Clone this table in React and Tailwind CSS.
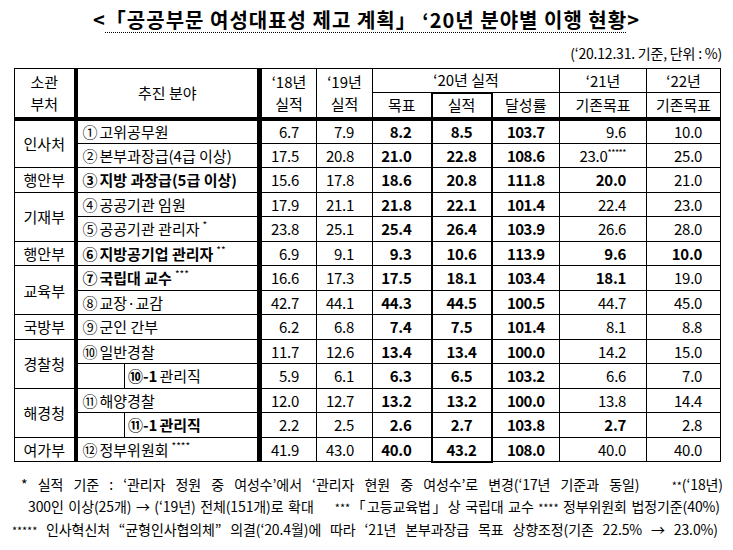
import React from 'react';

const rows = [
  { dept: '인사처', span: 2, num: '①', label: '고위공무원', v: ['6.7', '7.9', '8.2', '8.5', '103.7', '9.6', '10.0'] },
  { num: '②', label: '본부과장급(4급 이상)', v: ['17.5', '20.8', '21.0', '22.8', '108.6', '23.0', '25.0'], sup21: '*****' },
  { dept: '행안부', span: 1, num: '③', label: '지방 과장급(5급 이상)', bold: true, v: ['15.6', '17.8', '18.6', '20.8', '111.8', '20.0', '21.0'], b21: true },
  { dept: '기재부', span: 2, num: '④', label: '공공기관 임원', v: ['17.9', '21.1', '21.8', '22.1', '101.4', '22.4', '23.0'] },
  { num: '⑤', label: '공공기관 관리자', sup: '*', v: ['23.8', '25.1', '25.4', '26.4', '103.9', '26.6', '28.0'] },
  { dept: '행안부', span: 1, num: '⑥', label: '지방공기업 관리자', sup: '**', bold: true, v: ['6.9', '9.1', '9.3', '10.6', '113.9', '9.6', '10.0'], b21: true, b22: true },
  { dept: '교육부', span: 2, num: '⑦', label: '국립대 교수', sup: '***', bold: true, v: ['16.6', '17.3', '17.5', '18.1', '103.4', '18.1', '19.0'], b21: true },
  { num: '⑧', label: '교장·교감', v: ['42.7', '44.1', '44.3', '44.5', '100.5', '44.7', '45.0'] },
  { dept: '국방부', span: 1, num: '⑨', label: '군인 간부', v: ['6.2', '6.8', '7.4', '7.5', '101.4', '8.1', '8.8'] },
  { dept: '경찰청', span: 2, num: '⑩', label: '일반경찰', v: ['11.7', '12.6', '13.4', '13.4', '100.0', '14.2', '15.0'] },
  { sub: true, num: '⑩-1', label: '관리직', v: ['5.9', '6.1', '6.3', '6.5', '103.2', '6.6', '7.0'] },
  { dept: '해경청', span: 2, num: '⑪', label: '해양경찰', v: ['12.0', '12.7', '13.2', '13.2', '100.0', '13.8', '14.4'] },
  { sub: true, num: '⑪-1', label: '관리직', bold: true, v: ['2.2', '2.5', '2.6', '2.7', '103.8', '2.7', '2.8'], b21: true },
  { dept: '여가부', span: 1, num: '⑫', label: '정부위원회', sup: '****', v: ['41.9', '43.0', '40.0', '43.2', '108.0', '40.0', '40.0'], last: true },
];

const th = 'border border-black font-normal text-center align-middle leading-[22px] p-0';
const td = 'border border-black align-middle p-0 leading-none';

function Label({ r }) {
  return (
    <span className={r.bold ? 'font-bold' : ''}>
      <span className={r.sub ? 'font-bold' : ''}>{r.num}</span>
      <span className="ml-[2px]">{r.label}</span>
      {r.sup && <span className="relative -top-[6px] ml-[3px] text-[10px] font-normal">{r.sup}</span>}
    </span>
  );
}

export default function App() {
  return (
    <div className="w-[733px] h-[550px] bg-white text-black font-['Noto_Sans_CJK_KR',sans-serif] overflow-hidden">
      <div className="h-[42px] pt-[6px] text-center text-[20px] font-bold leading-[28px] tracking-[1px]">
        &lt;<span className="underline decoration-dotted decoration-[1px] underline-offset-[4px]">「공공부문 여성대표성 제고 계획」 ‘20년 분야별 이행 현황</span>&gt;
      </div>
      <div className="h-[26px] text-right pr-[11px] text-[14px] leading-[22px] tracking-[-0.2px]">
        (‘20.12.31. 기준, 단위 : %)
      </div>
      <table className="ml-[14px] w-[706px] table-fixed border-collapse border border-black text-[15px]">
        <colgroup>
          <col className="w-[61px]" />
          <col className="w-[49px]" />
          <col className="w-[135px]" />
          <col className="w-[57px]" />
          <col className="w-[56px]" />
          <col className="w-[59px]" />
          <col className="w-[60px]" />
          <col className="w-[68px]" />
          <col className="w-[87px]" />
          <col className="w-[74px]" />
        </colgroup>
        <thead>
          <tr className="h-[24px]">
            <th rowSpan={2} className={`${th} border-r-4 border-r-double border-b-4 border-b-double`}>소관<br />부처</th>
            <th rowSpan={2} colSpan={2} className={`${th} border-r-[5px] border-r-double border-b-4 border-b-double`}>추진 분야</th>
            <th rowSpan={2} className={`${th} border-b-4 border-b-double`}>‘18년<br />실적</th>
            <th rowSpan={2} className={`${th} border-b-4 border-b-double`}>‘19년<br />실적</th>
            <th colSpan={3} className={`${th} font-bold`}>‘20년 실적</th>
            <th className={th}>‘21년</th>
            <th className={th}>‘22년</th>
          </tr>
          <tr className="h-[26px]">
            <th className={`${th} font-bold border-b-4 border-b-double`}>목표</th>
            <th className={`${th} font-bold border-2 border-b-4 border-b-double`}>실적</th>
            <th className={`${th} font-bold border-b-4 border-b-double`}>달성률</th>
            <th className={`${th} border-b-4 border-b-double`}>기존목표</th>
            <th className={`${th} border-b-4 border-b-double`}>기존목표</th>
          </tr>
        </thead>
        <tbody>
          {rows.map((r, i) => (
            <tr key={i} className="h-[24.5px]">
              {r.dept && (
                <td rowSpan={r.span} className={`${td} border-r-4 border-r-double text-center`}>{r.dept}</td>
              )}
              {r.sub ? (
                <>
                  <td className={td}></td>
                  <td className={`${td} border-r-[5px] border-r-double pl-[3px] whitespace-nowrap`}><Label r={r} /></td>
                </>
              ) : (
                <td colSpan={2} className={`${td} border-r-[5px] border-r-double pl-[5px] whitespace-nowrap`}><Label r={r} /></td>
              )}
              <td className={`${td} text-right pr-[17px] tracking-[-0.3px]`}>{r.v[0]}</td>
              <td className={`${td} text-right pr-[18px] tracking-[-0.3px]`}>{r.v[1]}</td>
              <td className={`${td} text-right pr-[19px] font-bold tracking-[-0.3px]`}>{r.v[2]}</td>
              <td className={`${td} border-x-2 ${r.last ? 'border-b-2' : ''} text-center font-bold tracking-[-0.3px]`}>{r.v[3]}</td>
              <td className={`${td} text-center font-bold tracking-[-0.5px]`}>{r.v[4]}</td>
              <td className={`${td} text-right pr-[20px] tracking-[-0.3px] ${r.b21 ? 'font-bold' : ''}`}>
                {r.v[5]}
                {r.sup21 && <span className="relative -top-[6px] text-[9px] tracking-[-0.5px]">{r.sup21}</span>}
              </td>
              <td className={`${td} text-right pr-[18px] tracking-[-0.3px] ${r.b22 ? 'font-bold' : ''}`}>{r.v[6]}</td>
            </tr>
          ))}
        </tbody>
      </table>
      <div className="mt-[10px] text-[14px] leading-[22.5px] tracking-[-0.1px]">
        <div className="h-[22.5px] pl-[21px] pr-[10px] text-justify [text-align-last:justify]">
          * 실적 기준 : ‘관리자 정원 중 여성수’에서 ‘관리자 현원 중 여성수’로 변경(‘17년 기준과 동일) <span className="inline-block w-[12px]"></span> <span className="text-[11px] leading-none">**</span>(‘18년)
        </div>
        <div className="h-[22.5px] pl-[28px] pr-[13px] text-justify [text-align-last:justify]">
          300인 이상(25개) → (‘19년) 전체(151개)로 확대 <span className="inline-block w-[12px]"></span> <span className="text-[11px] leading-none">***</span>「고등교육법」상 국립대 교수 <span className="text-[11px] leading-none">****</span> 정부위원회 법정기준(40%)
        </div>
        <div className="h-[22.5px] pl-[12px] pr-[15px] text-justify [text-align-last:justify] whitespace-nowrap">
          <span className="text-[11px] leading-none">*****</span> 인사혁신처 “균형인사협의체” 의결(‘20.4월)에 따라 ‘21년 본부과장급 목표 상향조정(기존 22.5% → 23.0%)
        </div>
      </div>
    </div>
  );
}
